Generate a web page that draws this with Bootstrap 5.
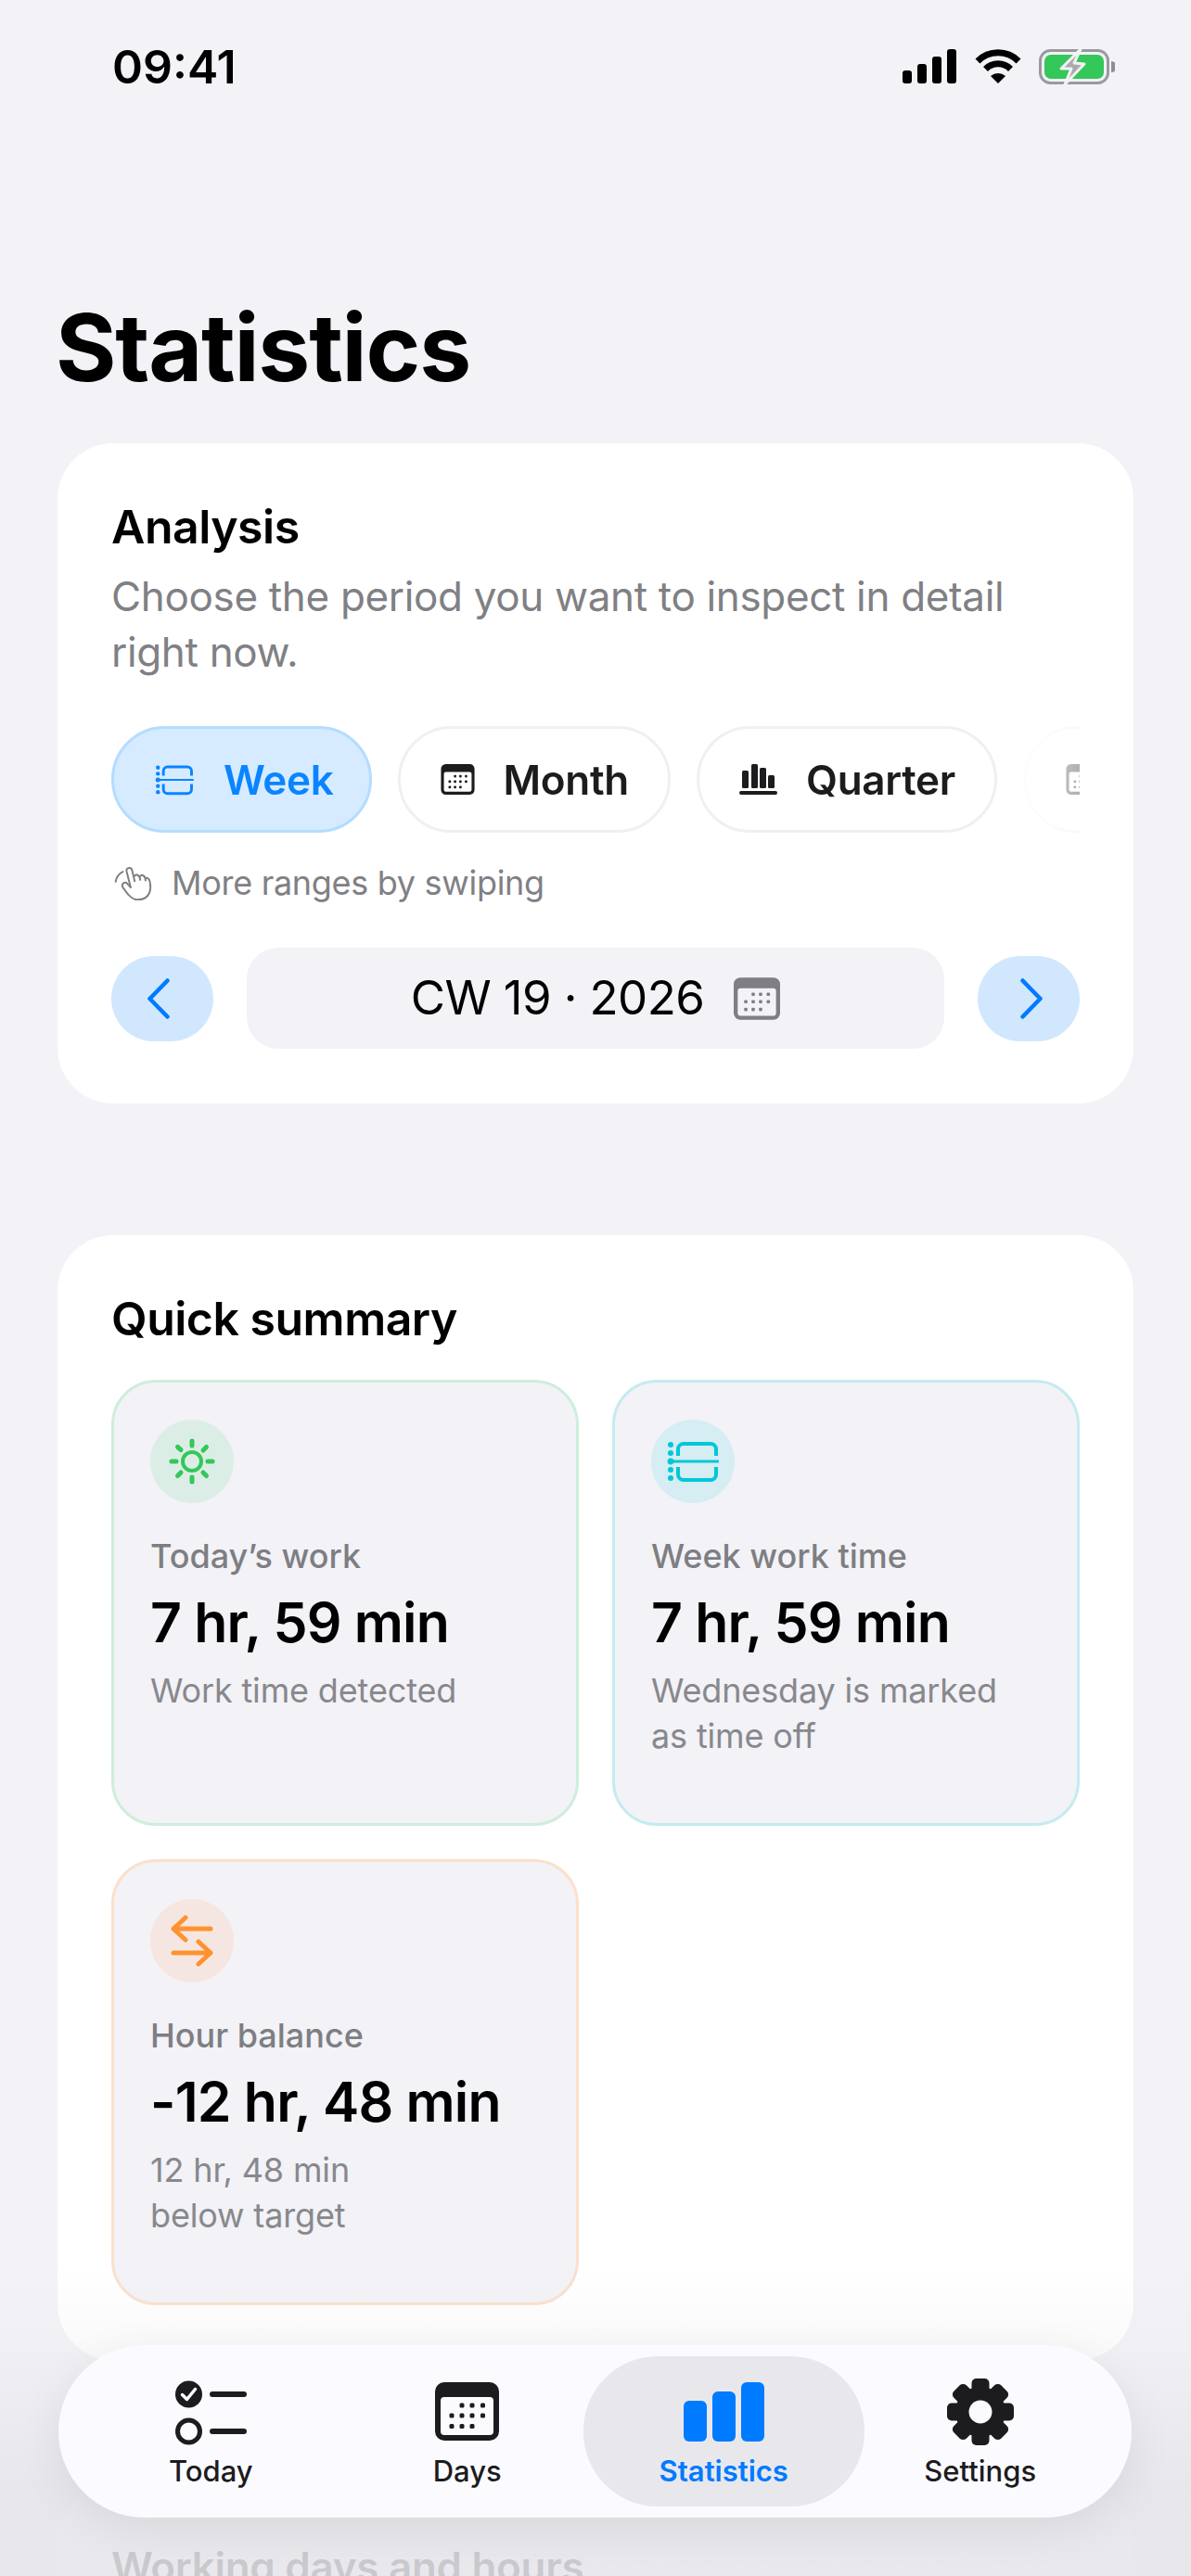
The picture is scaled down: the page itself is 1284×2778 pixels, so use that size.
<!DOCTYPE html>
<html lang="en">
<head>
  <meta charset="UTF-8">
  <meta name="viewport" content="width=device-width, initial-scale=1.0">
  <title>Statistics</title>
  <link rel="stylesheet" href="https://cdn.jsdelivr.net/npm/bootstrap@5.3.3/dist/css/bootstrap.min.css">
  <style>
    body { background: #f2f2f7; font-family: Inter, "Liberation Sans", sans-serif; color: #000; }
    .screen { position: relative; height: 2778px; overflow: hidden; padding: 0 62px; }

    .status-row { padding: 53px 20px 0 59px; height: 91px; }
    .status-time { font-size: 50px; font-weight: 600; line-height: 38px; }
    .page-title { font-size: 100px; font-weight: 700; line-height: 120px; letter-spacing: -1.2px; margin: 224px 0 43px -2px; }

    .panel { border: 0; border-radius: 60px; background: #fff; margin-bottom: 137px; }
    .panel:first-of-type { margin-bottom: 142px; }
    .panel .card-body { padding: 60px 58px 59px; }
    .panel-title { font-size: 50px; font-weight: 600; line-height: 60px; letter-spacing: -.5px; margin: 0; }
    .panel-sub { font-size: 44px; line-height: 60px; letter-spacing: -.34px; color: #808084; margin: 15px 0 50px; }

    .chip-row { gap: 28px; overflow: hidden; -webkit-mask-image: linear-gradient(to right, #000 92%, rgba(0,0,0,.12) 94%, rgba(0,0,0,.35) 100%); mask-image: linear-gradient(to right, #000 92%, rgba(0,0,0,.12) 94%, rgba(0,0,0,.35) 100%); }
    .range-chip { flex-shrink: 0; height: 115px; padding: 0 42px 0 43px; gap: 31px; border: 3px solid #f0f0f0; border-radius: 58px; background: #fff; color: #1c1c1e; font-size: 44px; font-weight: 600; letter-spacing: -.3px; line-height: 1; }
    .range-chip.is-on { padding-right: 38px; background: #d6ebff; border-color: #b4dcff; color: #0a84ff; }
    .chip-icon { width: 44px; height: 34px; }
    .chip-icon-cal { width: 37px; height: 33px; }
    .chip-icon-bars { width: 41px; height: 33px; }

    .swipe-hint { font-size: 36px; line-height: 44px; letter-spacing: -.3px; color: #808084; margin-top: 32px; gap: 20px; padding-left: 3px; }
    .swipe-hint svg { width: 42px; height: 37px; }

    .period-row { margin-top: 48px; gap: 36px; }
    .step-btn { width: 110px; height: 92px; padding: 0; border: 0; border-radius: 46px; background: #d1e7fd; color: #007aff; flex-shrink: 0; }
    .step-prev { padding-right: 8px; }
    .step-next { padding-left: 6px; }
    .step-btn svg { width: 24px; height: 44px; }
    .period-box { height: 109px; border-radius: 34px; background: #f2f2f7; font-size: 51px; font-weight: 400; letter-spacing: -.6px; gap: 32px; }
    .period-box svg { width: 50px; height: 46px; color: #7f7f83; }

    .quick-title { margin-bottom: 36px; }
    .stat-grid { grid-template-columns: 1fr 1fr; gap: 36px; }
    .stat-tile { min-height: 481px; padding: 40px 39px 0; border: 3px solid; border-radius: 48px; background: #f2f2f7; }
    .tile-green { border-color: #cdeedb; }
    .tile-cyan { border-color: #c4ebf1; }
    .tile-orange { border-color: #fbe0cc; }
    .tile-icon { width: 90px; height: 90px; border-radius: 50%; }
    .tile-green .tile-icon { background: #dcede6; color: #34c759; }
    .tile-cyan .tile-icon { background: #d5edf3; color: #00c7d9; }
    .tile-orange .tile-icon { background: #f6e6e1; color: #ff9230; }
    .tile-label { font-size: 36px; font-weight: 500; line-height: 48px; color: #7e7e82; margin-top: 33px; }
    .tile-value { font-size: 59px; font-weight: 600; line-height: 72px; letter-spacing: -.8px; margin-top: 12px; white-space: nowrap; }
    .tile-note { font-size: 36px; line-height: 49px; letter-spacing: -.15px; color: #88888c; margin-top: 13px; }
    .next-title { font-size: 44px; line-height: 52px; letter-spacing: -.3px; }

    .bottom-fade { position: absolute; left: 0; right: 0; top: 2440px; bottom: 0; z-index: 5; background: linear-gradient(to bottom, rgba(229,229,234,0) 0, rgba(229,229,234,.2) 90px, rgba(229,229,234,.88) 240px); }
    .tab-bar { position: absolute; left: 63px; right: 64px; top: 2529px; height: 186px; padding: 12px 25px 12px 26px; z-index: 10; isolation: isolate; border-radius: 93px; background: #fbfbff; box-shadow: 0 12px 50px rgba(0,0,0,.07); }
    .tab-item { position: relative; flex: 1 1 0; color: #1c1c1e; font-size: 31px; font-weight: 500; line-height: 40px; text-decoration: none; }
    .tab-item.is-on { color: #007aff; font-weight: 600; }
    .tab-item.is-on::before { content: ""; position: absolute; inset: 0 -13px; z-index: -1; border-radius: 80px; background: #e8e8ec; }
    .tab-icon { height: 72px; margin-top: 24px; margin-bottom: 8px; }
  </style>
</head>
<body>
  <svg width="0" height="0" class="position-absolute">
    <symbol id="ico-timeline" viewBox="0 0 56 46">
      <g fill="currentColor"><circle cx="4" cy="5" r="3"/><circle cx="4" cy="14" r="3"/><circle cx="4" cy="23" r="3.4"/><circle cx="4" cy="32" r="3"/><circle cx="4" cy="41" r="3"/></g>
      <path d="M4 23H55" stroke="currentColor" stroke-width="3" stroke-linecap="round" fill="none"/>
      <path d="M12 17V10a6 6 0 0 1 6-6H47a6 6 0 0 1 6 6V17M12 29V37a6 6 0 0 0 6 6H47a6 6 0 0 0 6-6V29" stroke="currentColor" stroke-width="4" fill="none"/>
    </symbol>
    <symbol id="ico-cal" viewBox="0 0 69 63">
      <path fill="currentColor" fill-rule="evenodd" d="M10 0H59a10 10 0 0 1 10 10V53a10 10 0 0 1-10 10H10A10 10 0 0 1 0 53V10A10 10 0 0 1 10 0ZM10 16a4 4 0 0 0-4 4V53a4 4 0 0 0 4 4H59a4 4 0 0 0 4-4V20a4 4 0 0 0-4-4Z"/>
      <g fill="currentColor">
        <rect x="26.5" y="22.5" width="5" height="5" rx="1.5"/><rect x="37.5" y="22.5" width="5" height="5" rx="1.5"/><rect x="49" y="22.5" width="5" height="5" rx="1.5"/>
        <rect x="15.5" y="33.5" width="5" height="5" rx="1.5"/><rect x="26.5" y="33.5" width="5" height="5" rx="1.5"/><rect x="37.5" y="33.5" width="5" height="5" rx="1.5"/><rect x="49" y="33.5" width="5" height="5" rx="1.5"/>
        <rect x="15.5" y="45" width="5" height="5" rx="1.5"/><rect x="26.5" y="45" width="5" height="5" rx="1.5"/><rect x="37.5" y="45" width="5" height="5" rx="1.5"/>
      </g>
    </symbol>
  </svg>

  <div class="screen">
    <div class="status-row d-flex justify-content-between align-items-start">
      <span class="status-time">09:41</span>
      <svg width="229" height="38" viewBox="0 0 229 38">
        <g fill="#000">
          <rect x="0" y="23" width="10" height="14" rx="3"/><rect x="16" y="16" width="10" height="21" rx="3"/><rect x="32" y="8" width="10" height="29" rx="3"/><rect x="48" y="0" width="10" height="37" rx="3"/>
          <path d="M103 37L95 29A12 12 0 0 1 111 29Z"/>
        </g>
        <g fill="none" stroke="#000" stroke-width="7">
          <path d="M81 13A31 31 0 0 1 125 13"/><path d="M89.5 21.5A19 19 0 0 1 116.5 21.5"/>
        </g>
        <rect x="148.5" y="1.5" width="73" height="35" rx="11" fill="none" stroke="#9a9a9e" stroke-width="3"/>
        <rect x="153" y="6" width="64" height="26" rx="7" fill="#34c759"/>
        <path d="M225 13a6 6 0 0 1 0 12Z" fill="#8e8e92"/>
        <path d="M192 0L171 21L182 21L175 38L196 16L185 15Z" fill="#aaaaae" stroke="#f2f2f7" stroke-width="3" stroke-linejoin="round"/>
      </svg>
    </div>

    <h1 class="page-title">Statistics</h1>

    <section class="card panel">
      <div class="card-body">
        <h2 class="panel-title">Analysis</h2>
        <p class="panel-sub">Choose the period you want to inspect in detail right now.</p>
        <div class="chip-row d-flex">
          <button class="btn range-chip is-on d-flex align-items-center"><svg class="chip-icon"><use href="#ico-timeline"/></svg><span>Week</span></button>
          <button class="btn range-chip d-flex align-items-center"><svg class="chip-icon-cal"><use href="#ico-cal"/></svg><span>Month</span></button>
          <button class="btn range-chip d-flex align-items-center">
            <svg class="chip-icon-bars" viewBox="0 0 41 33" fill="currentColor"><rect x="3" y="7" width="7" height="19" rx="1.5"/><rect x="13" y="0" width="7" height="26" rx="1.5"/><rect x="22" y="4" width="7" height="22" rx="1.5"/><rect x="31" y="12" width="7" height="14" rx="1.5"/><rect x="0" y="29" width="41" height="4" rx="2"/></svg>
            <span>Quarter</span>
          </button>
          <button class="btn range-chip d-flex align-items-center"><svg class="chip-icon-cal"><use href="#ico-cal"/></svg></button>
        </div>
        <div class="swipe-hint d-flex align-items-center">
          <svg viewBox="40 40 125 110" fill="none" stroke="#808084" stroke-width="6" stroke-linecap="round" stroke-linejoin="round">
            <path d="M93 108 80 56C78 44 96 42 98 54L106 88"/>
            <path d="M105 72C112 64 122 68 124 84M124 72C130 66 140 70 141 86"/>
            <path d="M141 78C150 76 154 84 155 92 160 115 155 148 115 148 100 148 92 138 84 130L68 108C62 98 74 88 82 96L93 108"/>
            <path d="M45 90C47 76 56 64 68 58"/>
          </svg>
          <span>More ranges by swiping</span>
        </div>
        <div class="period-row d-flex align-items-center">
          <button class="btn step-btn step-prev" aria-label="Previous"><svg viewBox="0 0 24 44" fill="none" stroke="currentColor" stroke-width="4.500" stroke-linecap="round" stroke-linejoin="round"><path d="M21.500 2.500 2.500 22l19 19.500"/></svg></button>
          <div class="period-box flex-fill d-flex align-items-center justify-content-center">
            <span>CW 19 · 2026</span>
            <svg><use href="#ico-cal"/></svg>
          </div>
          <button class="btn step-btn step-next" aria-label="Next"><svg viewBox="0 0 24 44" fill="none" stroke="currentColor" stroke-width="4.500" stroke-linecap="round" stroke-linejoin="round"><path d="M2.500 2.500 21.500 22l-19 19.500"/></svg></button>
        </div>
      </div>
    </section>

    <section class="card panel">
      <div class="card-body">
        <h2 class="panel-title quick-title">Quick summary</h2>
        <div class="stat-grid d-grid">
          <div class="stat-tile tile-green">
            <div class="tile-icon d-flex align-items-center justify-content-center">
              <svg width="50" height="50" viewBox="0 0 50 50" fill="none" stroke="currentColor" stroke-linecap="round"><circle cx="25" cy="25" r="10" stroke-width="4"/><path stroke-width="5" d="M25 3v5M25 42v5M3 25h5M42 25h5M9.500 9.500l3.500 3M37 37l3.500 3.500M9.500 40.500l3.500-3.500M37 13l3.500-3.500"/></svg>
            </div>
            <div class="tile-label">Today’s work</div>
            <div class="tile-value">7 hr, 59 min</div>
            <div class="tile-note">Work time detected</div>
          </div>
          <div class="stat-tile tile-cyan">
            <div class="tile-icon d-flex align-items-center justify-content-center">
              <svg width="56" height="46"><use href="#ico-timeline"/></svg>
            </div>
            <div class="tile-label">Week work time</div>
            <div class="tile-value">7 hr, 59 min</div>
            <div class="tile-note">Wednesday is marked as time off</div>
          </div>
          <div class="stat-tile tile-orange">
            <div class="tile-icon d-flex align-items-center justify-content-center">
              <svg width="46" height="56" viewBox="0 0 46 56" fill="none" stroke="currentColor" stroke-width="5" stroke-linecap="round" stroke-linejoin="round"><path d="M43 15H3M16 3 3 15l13 12M3 41H43M30 29l13 12-13 12"/></svg>
            </div>
            <div class="tile-label">Hour balance</div>
            <div class="tile-value">-12 hr, 48 min</div>
            <div class="tile-note">12 hr, 48 min<br>below target</div>
          </div>
        </div>
      </div>
    </section>

    <section class="card panel">
      <div class="card-body">
        <h2 class="panel-title next-title">Working days and hours</h2>
      </div>
    </section>

    <div class="bottom-fade"></div>

    <nav class="tab-bar d-flex">
      <a class="tab-item d-flex flex-column align-items-center" href="#">
        <svg class="tab-icon" width="77" viewBox="0 0 77 72">
          <circle cx="14.500" cy="17" r="14.500" fill="#1c1c1e"/>
          <path d="M7.500 17.500l5 5 9-11" fill="none" stroke="#fff" stroke-width="3.500" stroke-linecap="round" stroke-linejoin="round"/>
          <circle cx="14.500" cy="57" r="12" fill="none" stroke="#1c1c1e" stroke-width="5"/>
          <path d="M40 17H74M40 57H74" stroke="#1c1c1e" stroke-width="6" stroke-linecap="round"/>
        </svg>
        Today
      </a>
      <a class="tab-item d-flex flex-column align-items-center" href="#">
        <svg class="tab-icon" width="69" viewBox="0 -4 69 72"><use href="#ico-cal" width="69" height="63"/></svg>
        Days
      </a>
      <a class="tab-item is-on d-flex flex-column align-items-center" href="#">
        <svg class="tab-icon" width="87" viewBox="0 0 87 72" fill="currentColor"><rect x="0" y="24" width="25" height="44" rx="6"/><rect x="31" y="14" width="25" height="54" rx="6"/><rect x="62" y="4" width="25" height="64" rx="6"/></svg>
        Statistics
      </a>
      <a class="tab-item d-flex flex-column align-items-center" href="#">
        <svg class="tab-icon" width="72" viewBox="0 0 72 72" fill="#1c1c1e">
          <circle cx="36" cy="36" r="27"/>
          <rect x="26.500" y="0" width="19" height="72" rx="5"/><rect x="26.500" y="0" width="19" height="72" rx="5" transform="rotate(45 36 36)"/><rect x="26.500" y="0" width="19" height="72" rx="5" transform="rotate(90 36 36)"/><rect x="26.500" y="0" width="19" height="72" rx="5" transform="rotate(135 36 36)"/>
          <circle cx="36" cy="36" r="12.500" fill="#fbfbff"/>
        </svg>
        Settings
      </a>
    </nav>
  </div>

  <script src="https://cdn.jsdelivr.net/npm/bootstrap@5.3.3/dist/js/bootstrap.bundle.min.js"></script>
</body>
</html>
